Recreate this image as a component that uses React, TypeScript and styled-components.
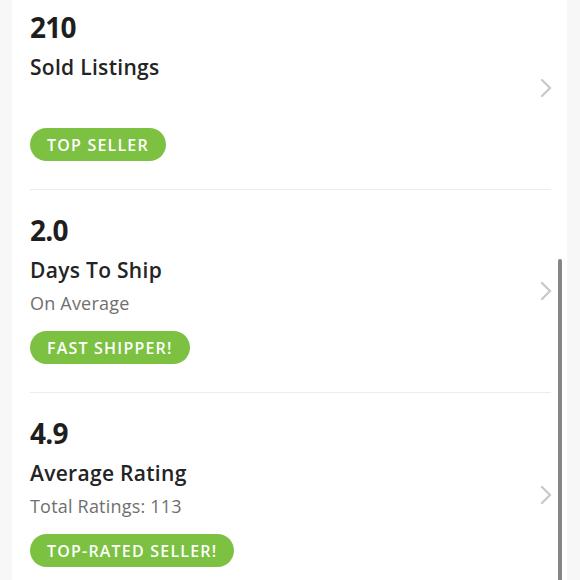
import React from "react";
import styled, { createGlobalStyle } from "styled-components";

const GlobalStyle = createGlobalStyle`
  html, body {
    margin: 0;
    padding: 0;
    background: #f7f7f7;
  }
  body {
    font-family: "Open Sans", "Liberation Sans", sans-serif;
    color: #222;
  }
`;

const Page = styled.div`
  position: relative;
  height: 580px;
  overflow: hidden;
  padding: 0 13px 0 12px;
  background: #f7f7f7;
`;

const Card = styled.div`
  background: #fff;
  height: 100%;
  padding: 0 16px 0 18px;
  overflow: hidden;
`;

const List = styled.div`
  margin-top: -13px;
`;

const Row = styled.div<{ last?: boolean }>`
  display: flex;
  align-items: flex-start;
  justify-content: space-between;
  height: 203px;
  box-sizing: border-box;
  padding-top: 24px;
  border-bottom: ${p => (p.last ? "none" : "1px solid #ececec")};
`;

const Info = styled.div`
  display: flex;
  flex-direction: column;
`;

const Stat = styled.div`
  font-size: 28px;
  font-weight: 700;
  line-height: 32px;
  letter-spacing: -0.8px;
  color: #1e1e1e;
`;

const Title = styled.div`
  margin-top: 11px;
  font-size: 21px;
  font-weight: 600;
  line-height: 26px;
  letter-spacing: 0.3px;
  color: #242424;
`;

const Subtitle = styled.div`
  margin-top: 9px;
  font-size: 18px;
  line-height: 22px;
  letter-spacing: 0.2px;
  color: #6f6f6f;
  min-height: 22px;
`;

const Badge = styled.span`
  align-self: flex-start;
  margin-top: 17px;
  display: inline-flex;
  align-items: center;
  height: 33px;
  padding: 0 17px;
  border-radius: 17px;
  background: #7cc142;
  color: #fff;
  font-size: 16px;
  font-weight: 600;
  letter-spacing: 1.2px;
`;

const Chevron = styled.svg`
  align-self: center;
  margin-top: -24px;
  width: 14px;
  height: 20px;
  flex-shrink: 0;
  margin-right: -2px;
`;

const ScrollThumb = styled.div`
  position: absolute;
  left: 558px;
  top: 259px;
  bottom: -4px;
  width: 4px;
  border-radius: 2px;
  background: #858585;
`;

const stats = [
  { value: "210", title: "Sold Listings", subtitle: "", badge: "TOP SELLER" },
  { value: "2.0", title: "Days To Ship", subtitle: "On Average", badge: "FAST SHIPPER!" },
  { value: "4.9", title: "Average Rating", subtitle: "Total Ratings: 113", badge: "TOP-RATED SELLER!" },
];

const App: React.FC = () => {
  return (
    <>
      <GlobalStyle />
      <Page>
        <Card>
          <List>
            {stats.map((s, i) => (
              <Row key={i} last={i === stats.length - 1}>
                <Info>
                  <Stat>{s.value}</Stat>
                  <Title>{s.title}</Title>
                  <Subtitle>{s.subtitle}</Subtitle>
                  <Badge>{s.badge}</Badge>
                </Info>
                <Chevron viewBox="0 0 14 20">
                  <path d="M3 2 L11 10 L3 18" fill="none" stroke="#c8c8c8" strokeWidth="2.2" strokeLinecap="round" />
                </Chevron>
              </Row>
            ))}
          </List>
        </Card>
        <ScrollThumb />
      </Page>
    </>
  );
};

export default App;
